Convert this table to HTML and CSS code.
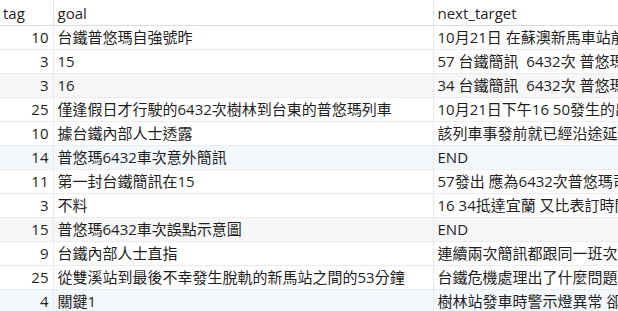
FILE: index.html
```html
<!DOCTYPE html>
<html lang="zh-Hant">
<head>
<meta charset="utf-8">
<link rel="stylesheet" href="styles.css">
</head>
<body>
<table class="grid">
  <colgroup><col class="c-tag"><col class="c-goal"><col class="c-next"></colgroup>
  <thead>
    <tr><th class="h-tag">tag</th><th>goal</th><th>next_target</th></tr>
  </thead>
  <tbody>
    <tr><td class="num">10</td><td>台鐵普悠瑪自強號昨</td><td>10月21日 在蘇澳新馬車站前發生出軌意外</td></tr>
    <tr><td class="num">3</td><td>15</td><td>57 台鐵簡訊&nbsp; 6432次 普悠瑪列車</td></tr>
    <tr class="gray"><td class="num">3</td><td>16</td><td>34 台鐵簡訊&nbsp; 6432次 普悠瑪列車</td></tr>
    <tr><td class="num">25</td><td>僅逢假日才行駛的6432次樹林到台東的普悠瑪列車</td><td>10月21日下午16 50發生的出軌事故</td></tr>
    <tr><td class="num">10</td><td>據台鐵內部人士透露</td><td>該列車事發前就已經沿途延誤</td></tr>
    <tr class="blue"><td class="num">14</td><td>普悠瑪6432車次意外簡訊</td><td>END</td></tr>
    <tr><td class="num">11</td><td>第一封台鐵簡訊在15</td><td>57發出 應為6432次普悠瑪司機</td></tr>
    <tr><td class="num">3</td><td>不料</td><td>16 34抵達宜蘭 又比表訂時間晚</td></tr>
    <tr class="gray"><td class="num">15</td><td>普悠瑪6432車次誤點示意圖</td><td>END</td></tr>
    <tr><td class="num">9</td><td>台鐵內部人士直指</td><td>連續兩次簡訊都跟同一班次有關</td></tr>
    <tr><td class="num">25</td><td>從雙溪站到最後不幸發生脫軌的新馬站之間的53分鐘</td><td>台鐵危機處理出了什麼問題</td></tr>
    <tr class="blue"><td class="num">4</td><td>關鍵1</td><td>樹林站發車時警示燈異常 卻仍</td></tr>
  </tbody>
</table>
</body>
</html>
```
FILE: styles.css
```css
html, body {
  margin: 0;
  padding: 0;
  background: #ffffff;
  overflow: hidden;
}
body {
  width: 618px;
  height: 311px;
}
.grid {
  border-collapse: collapse;
  table-layout: fixed;
  width: 820px;
  font-family: "Segoe UI", "Open Sans", "Noto Sans CJK TC", sans-serif;
  font-size: 15px;
  color: #1f1f1f;
}
.c-tag { width: 53px; }
.c-goal { width: 380px; }
.c-next { width: 387px; }
.grid th {
  height: 25px;
  padding: 0 3px 0 4px;
  text-align: left;
  font-weight: normal;
  border-right: 1px solid #e6e6e6;
  border-bottom: 1px solid #dcdcdc;
  white-space: nowrap;
  overflow: hidden;
  line-height: 24px;
}
.grid th.h-tag { padding-left: 3px; }
.grid td {
  height: 23px;
  padding: 0 3px 0 4px;
  border-right: 1px solid #eaeaea;
  border-bottom: 1px solid #ececec;
  white-space: nowrap;
  overflow: hidden;
  line-height: 23px;
}
.grid td.num {
  text-align: right;
  padding-right: 4px;
}
.grid tr.gray td { background: #f7f7f7; }
.grid tr.blue td { background: #f3f8fd; }
```
